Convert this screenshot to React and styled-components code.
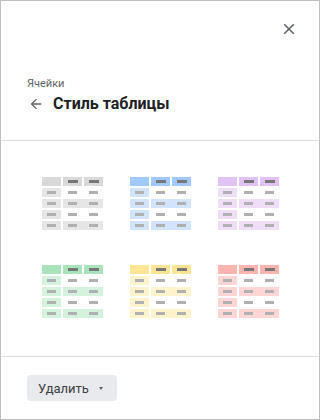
import React from "react";
import styled, { createGlobalStyle } from "styled-components";

const Global = createGlobalStyle`
  html, body { margin: 0; padding: 0; background: #ffffff; }
  body { font-family: Roboto, "Noto Sans", Arial, sans-serif; }
  * { box-sizing: border-box; }
`;

const Panel = styled.div`
  width: 320px;
  height: 420px;
  border: 1px solid #bdbdbd;
  background: #fff;
  display: flex;
  flex-direction: column;
`;

const Header = styled.div`
  height: 140px;
  border-bottom: 1px solid #dadce0;
  padding: 22px 24px 0 26px;
  display: flex;
  flex-direction: column;
`;

const TopBar = styled.div`
  display: flex;
  justify-content: flex-end;
  height: 12px;
`;

const IconButton = styled.button`
  border: 0;
  padding: 0;
  margin: 0;
  background: none;
  width: 12px;
  height: 12px;
  display: flex;
  cursor: pointer;
`;

const Subtitle = styled.div`
  margin-top: 42px;
  font-size: 11px;
  line-height: 14px;
  color: #5f6368;
`;

const TitleRow = styled.div`
  margin-top: 3px;
  display: flex;
  align-items: center;
  gap: 9px;
  height: 20px;
`;

const BackIcon = styled.svg`
  margin-left: 1px;
  flex: none;
`;

const Title = styled.div`
  font-size: 16px;
  line-height: 20px;
  font-weight: 700;
  color: #202124;
`;

const Styles = styled.div`
  height: 216px;
  border-bottom: 1px solid #dadce0;
  padding: 36px 0 0 41px;
  display: grid;
  grid-template-columns: repeat(3, 61px);
  grid-auto-rows: 54px;
  column-gap: 27px;
  row-gap: 34px;
`;

const Table = styled.div`
  width: 61px;
  display: flex;
  flex-direction: column;
  gap: 2px;
  cursor: pointer;
`;

const Row = styled.div`
  display: flex;
  gap: 2px;
  height: 9px;
`;

const Cell = styled.div`
  width: 19px;
  height: 9px;
  display: flex;
  align-items: center;
  justify-content: center;
  background: ${(p) => p.$bg || "transparent"};
`;

const Rest = styled.div`
  display: flex;
  gap: 2px;
  width: 40px;
  background: ${(p) => p.$bg || "transparent"};
`;

const Bar = styled.div`
  width: ${(p) => (p.$head ? 10 : 9)}px;
  height: 3px;
  background: ${(p) => (p.$head ? "#777777" : "#b0b0b3")};
`;

const Footer = styled.div`
  flex: 1;
  padding: 18px 0 0 26px;
`;

const DeleteButton = styled.button`
  width: 90px;
  height: 26px;
  border: 0;
  border-radius: 4px;
  background: #e8eaed;
  color: #3c4043;
  font-family: Roboto, "Noto Sans", Arial, sans-serif;
  font-size: 13px;
  padding: 0 0 0 11px;
  display: flex;
  align-items: center;
  gap: 10px;
  cursor: pointer;
`;

const Caret = styled.span`
  width: 0;
  height: 0;
  border-left: 2.5px solid transparent;
  border-right: 2.5px solid transparent;
  border-top: 3px solid #5f6368;
  margin-top: 1px;
`;

const palettes = [
  { head: "#d9d9d9", body: "#e6e6e6" },
  { head: "#9fc9ff", body: "#d2e4fc" },
  { head: "#e2c1f5", body: "#f0ddf7" },
  { head: "#a9e3ba", body: "#d5f2dd" },
  { head: "#fde595", body: "#fef3cb" },
  { head: "#ffb4b0", body: "#ffd6d4" },
];

function StylePreview({ head, body }) {
  return (
    <Table>
      <Row>
        <Cell $bg={head} />
        <Cell $bg={head}><Bar $head /></Cell>
        <Cell $bg={head}><Bar $head /></Cell>
      </Row>
      {[0, 1, 2, 3].map((i) => {
        const striped = i % 2 === 1;
        return (
          <Row key={i}>
            <Cell $bg={body}><Bar /></Cell>
            <Rest $bg={striped ? body : undefined}>
              <Cell><Bar /></Cell>
              <Cell><Bar /></Cell>
            </Rest>
          </Row>
        );
      })}
    </Table>
  );
}

export default function App() {
  return (
    <>
      <Global />
      <Panel>
        <Header>
          <TopBar>
            <IconButton aria-label="Закрыть">
              <svg width="12" height="12" viewBox="0 0 12 12">
                <path d="M1.2 1.2 L10.8 10.8 M10.8 1.2 L1.2 10.8" stroke="#5f6368" strokeWidth="1.6" fill="none" />
              </svg>
            </IconButton>
          </TopBar>
          <Subtitle>Ячейки</Subtitle>
          <TitleRow>
            <BackIcon width="16" height="16" viewBox="0 0 24 24">
              <path d="M20 11H7.83l5.59-5.59L12 4l-8 8 8 8 1.41-1.41L7.83 13H20v-2z" fill="#5f6368" />
            </BackIcon>
            <Title>Стиль таблицы</Title>
          </TitleRow>
        </Header>
        <Styles>
          {palettes.map((p, i) => (
            <StylePreview key={i} head={p.head} body={p.body} />
          ))}
        </Styles>
        <Footer>
          <DeleteButton>
            Удалить
            <Caret />
          </DeleteButton>
        </Footer>
      </Panel>
    </>
  );
}
